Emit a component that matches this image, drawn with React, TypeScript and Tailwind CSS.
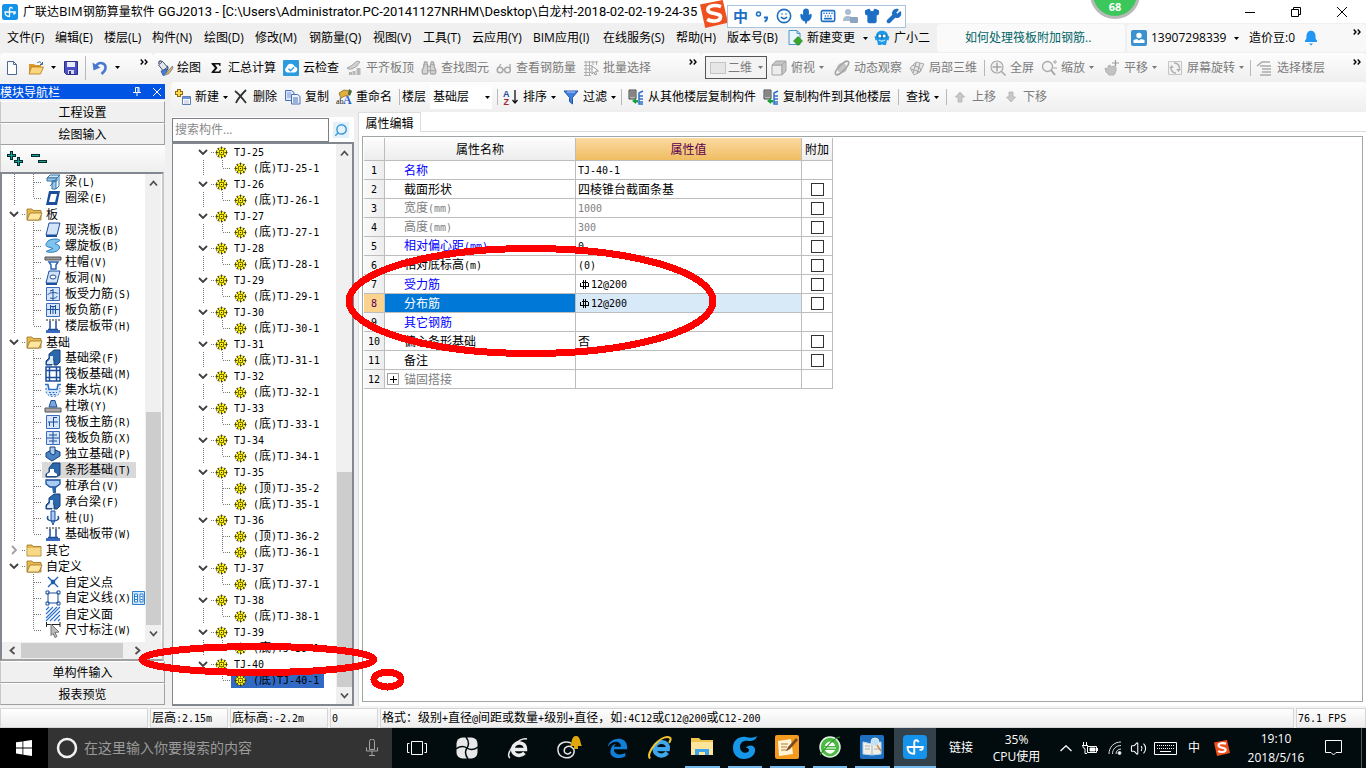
import React from "react";
import {
  Binoculars, Keyboard, Mic, Shirt, Smile, Wrench, Search, Volume2,
} from "lucide-react";

const UI = "font-['Open_Sans','Noto_Sans_CJK_SC',sans-serif]";

/* Splits a label into Latin and Han runs so that each keeps its own face. */
function Song({ t }: { t: string }) {
  const parts = t.match(/[\x20-\x7e]+|[^\x20-\x7e]+/g) || [];
  return (
    <span className="whitespace-pre font-['Noto_Sans_CJK_SC',sans-serif] text-[12px] leading-4">
      {parts.map((p, i) =>
        /^[\x20-\x7e]/.test(p) ? (
          <span key={i} className="font-['DejaVu_Sans_Mono',monospace] text-[10px]">{p}</span>
        ) : (
          <span key={i}>{p}</span>
        )
      )}
    </span>
  );
}

const Caret = ({ className = "" }: { className?: string }) => (
  <svg width="5" height="3" viewBox="0 0 5 3" className={"shrink-0 " + className}><path d="M0 0h5L2.5 3z" fill="currentColor" /></svg>
);
const Chevrons = () => (
  <svg width="8" height="6" viewBox="0 0 8 6" className="shrink-0"><path d="M.7.5L3 3 .7 5.5M4.7.5L7 3 4.7 5.5" fill="none" stroke="#000" strokeWidth="1.4" /></svg>
);
const Sep = ({ className = "" }: { className?: string }) => <span className={"h-4 w-px shrink-0 bg-[#b8b8b8] " + className} />;

const I = ({ children, s = 16 }: { children: React.ReactNode; s?: number }) => (
  <svg width={s} height={s} viewBox="0 0 16 16" fill="none" className="shrink-0 overflow-visible">{children}</svg>
);

/* ---- toolbar icons ---- */
const NewDoc = () => <I><path d="M3.5 1.5h6l3 3v10h-9z" fill="#fff" stroke="#4b6a93" /><path d="M9.500 1.500v3h3" stroke="#4b6a93" /></I>;
const OpenIco = () => <I><path d="M1 4h5l1 1h6v9H1z" fill="#d99a2b" /><path d="M3.500 7h12l-3 7H1z" fill="#fcd77a" stroke="#b57a1c" strokeWidth=".8" /><path d="M9 3c2-2 4-1 4.500 1M14.500 2v2.500h-2.500" stroke="#35629c" /></I>;
const SaveIco = () => <I><path d="M1.500 1.500h13v13h-11l-2-2z" fill="#4b4fc4" stroke="#2b2d86" /><path d="M4 2h8v5H4z" fill="#e8ebfa" /><path d="M5 10h6v4H5z" fill="#d5d8f0" /><path d="M6 11h2v3H6z" fill="#33368f" /></I>;
const UndoIco = () => <I><path d="M4 6c3-5 10-3 9.500 2 0 3-2 4.500-4 6" stroke="#4a78cf" strokeWidth="2.600" /><path d="M.5 2.500l1 8 7-3z" fill="#4a78cf" /></I>;
const PaintIco = () => <I><path d="M1.500 5l4-3.500 5 5.500-4.500 3.500z" fill="#e3e8f0" stroke="#43536e" /><path d="M2 4C1 1 4 0 5 2M10 6c1 1 1.500 3 0 4" stroke="#43536e" strokeWidth="1.300" /><path d="M4 11l6-2v4l-4 2.500z" fill="#4b7fd0" stroke="#27499c" strokeWidth=".7" /><path d="M15.500 6l-5 5.500-3.500 4 5-2 4-5.500z" fill="#e9b23c" stroke="#5d7aa8" strokeWidth=".8" /></I>;
const Sigma = () => <I><path d="M3.500 3h9v3h-1l-.7-1.500H7L9.500 8 6.500 11.500H11l1-1.800h1L12.500 13h-9v-1L7 8 3.500 4z" fill="#111" /></I>;
const CloudIco = () => <I><rect width="16" height="16" rx="1" fill="#2b9be0" /><path d="M4 12.500a3 3 0 01-.3-5.500 4.200 4.200 0 018-.6 3.100 3.100 0 01.3 6.100z" fill="#fff" /><path d="M5.500 8.800l2 2 3.500-3.500" stroke="#2b9be0" strokeWidth="1.400" /></I>;
const AlignIco = () => <I><path d="M1 8l4-2 6-5 3 1-3 4-5 3H2z" fill="#d2d2d2" stroke="#a5a5a5" /><path d="M3 15v-3h3v3zM6.500 15v-4h3v4zM10.500 15V8h4v7z" fill="#b7b7b7" /></I>;
const GlassesIco = () => <I><circle cx="4" cy="10" r="2.800" stroke="#a8a8a8" strokeWidth="1.500" /><circle cx="11.500" cy="10" r="2.800" stroke="#a8a8a8" strokeWidth="1.500" /><path d="M1.500 9L5 4M14 9V4M6.800 9.500h2" stroke="#a8a8a8" strokeWidth="1.300" /></I>;
const BatchIco = () => <I><path d="M1 2h14M1 5.500h8M1 9h7M1 12.500h7M1 15.500h7M3 1v14M6.500 1v14M10 1v4M13.500 1v4" stroke="#adadad" /><path d="M9 6l6.500 5-3 .3 1 3-1.500.6-1.200-3L9 14z" fill="#fff" stroke="#999" /></I>;
const CubeIco = () => <I><path d="M1 5h10v10H1z" fill="#ececec" stroke="#a5a5a5" /><path d="M1 5l4-4h10l-4 4zM11 5l4-4v10l-4 4z" fill="#c5c5c5" stroke="#a5a5a5" /></I>;
const OrbitIco = () => <I><circle cx="8" cy="8" r="5" fill="#c4c4c4" /><ellipse cx="8" cy="8" rx="9" ry="3" transform="rotate(-45 8 8)" stroke="#a5a5a5" strokeWidth="1.500" /></I>;
const LocalIco = () => <I><path d="M1 8l6-6 8 2-4 8-6 3z" fill="#e6e6e6" stroke="#aaa" /><path d="M4 5l7 3 1 3M7 3l-3 10M11 3L8 14M2 9l9 3" stroke="#a5a5a5" /></I>;
const FullIco = () => <I><circle cx="7" cy="7" r="6" stroke="#aaa" strokeWidth="1.200" fill="#f2f2f2" /><path d="M7 2.500v9M2.500 7h9M11.500 11.500l4 4" stroke="#a5a5a5" strokeWidth="1.500" /></I>;
const ZoomIco = () => <I><circle cx="6.500" cy="6.500" r="5" stroke="#aaa" strokeWidth="1.300" fill="#f4f4f4" /><path d="M10 10l4 5" stroke="#a5a5a5" strokeWidth="2" /><path d="M12 2h4M14 0v4M12 8h4" stroke="#aaa" /></I>;
const PanIco = () => <I><path d="M1 8l3 1V6l2-1 1 2 3-1 2 1v4l-2 4H5L2 12z" fill="#c2c2c2" stroke="#b2b2b2" /><path d="M8 3h7M11.500 0v6" stroke="#999" strokeWidth="1.200" /></I>;
const RotIco = () => <I><path d="M1.500 1.500h13v13h-13z" fill="#f2f2f2" stroke="#c5c5c5" /><path d="M7 3a5 5 0 015 7M9 13a5 5 0 01-5-6" stroke="#b0b0b0" strokeWidth="1.600" /><path d="M2 8l3-3 1.500 3zM9 9h5l-2.500 3z" fill="#b0b0b0" /></I>;
const FloorIco = () => <I><path d="M0 6l5-4h8M3 6h11M5 9h9M5 12h9M3 15h11" stroke="#aaa" strokeWidth="1.600" /></I>;
const NewComp = () => <I><path d="M4 0v8M0 4h8" stroke="#8b6b10" strokeWidth="4" /><path d="M4 1v6M1 4h6" stroke="#ffd84a" strokeWidth="2" /><path d="M7.500 7.500h8v8h-8z" fill="#fff" stroke="#5f7fb4" /><path d="M8 8h7v2H8z" fill="#6b93d6" /><path d="M9 12h5M9 14h5" stroke="#a9bddf" /></I>;
const DelIco = () => <I><path d="M2 2c4 3 8 8 11 12M13 1C9 5 5 9 3 14" stroke="#333" strokeWidth="1.800" /></I>;
const CopyIco = () => <I><path d="M.5 1.500h6l2.500 2v8H.500z" fill="#dce8fb" stroke="#4a6fb5" /><path d="M2 4h4M2 6h4M2 8h4" stroke="#7b9bd3" /><path d="M6.500 5.500h6l2.500 2v7.500H6.500z" fill="#eef4ff" stroke="#4a6fb5" /><path d="M8 9h5M8 11h5M8 13h5" stroke="#4a6fb5" /></I>;
const RenIco = () => <I><path d="M3 4l5-3 6 1-1 4-4 1-4 2-1-2z" fill="#e0b13c" stroke="#7b5b14" strokeWidth=".7" /><path d="M13 0l3 2-2 5-2-2z" fill="#476b3a" /><text x="0" y="15" fontSize="8" fontFamily="Liberation Serif" fill="#111">ab</text><text x="7" y="15" fontSize="12" fontWeight="bold" fontFamily="Liberation Serif" fill="#2a62c4">A</text></I>;
const SortIco = () => <I><text x="0" y="7.500" fontSize="9" fontWeight="bold" fontFamily="Liberation Sans" fill="#27499c">A</text><text x="0.500" y="15.500" fontSize="9" fontWeight="bold" fontFamily="Liberation Sans" fill="#9a2b33">Z</text><path d="M12 1v13M9.500 11l2.500 3 2.500-3" stroke="#111" strokeWidth="1.300" /></I>;
const FilterIco = () => <I><path d="M1 2h14L9.500 8.500V15l-3-2.500v-4z" fill="#3f7fe0" stroke="#2455a8" /><path d="M4 3h8" stroke="#b4d2ff" /></I>;
const FloorCopyIco = () => <I><path d="M1 1h7v9H1z" fill="#b8b8b8" stroke="#444" /><path d="M2 3h5M2 5h5M2 7h5" stroke="#555" /><path d="M15 2l-4 2v11h4M11 7h4M11 10h4M11 13h4" stroke="#2f71c9" strokeWidth="1.500" /><path d="M4 12l4-3v2h2v2.500H8V15z" fill="#17a03a" /></I>;
const UpIco = () => <I><path d="M8 3l4.500 5H10v5H6V8H3.500z" fill="#c9c9c9" stroke="#aaa" strokeWidth=".7" /></I>;
const DownIco = () => <I><path d="M8 13l4.500-5H10V3H6v5H3.500z" fill="#c9c9c9" stroke="#aaa" strokeWidth=".7" /></I>;
const ChangeIco = () => <I><path d="M2 .5h8l3 3v11H2z" fill="#eaf5fd" stroke="#4a95c9" /><path d="M10 .5v3h3" stroke="#4a95c9" /><path d="M11 6.500l4.500 4.500L11 15.500 6.500 11z" fill="#37a62b" stroke="#1c7a19" strokeWidth=".6" /></I>;
const RobotIco = () => <I><path d="M2 6c0-7 12-7 12 0l1.500.5-1 4-1.500-.5-1 5H9l-1-1-1 1H4l-1-5-1.500.5-1-4z" fill="#1e9be8" /><path d="M3 4.500h10v2.500c0 2-10 2-10 0z" fill="#1277bd" /><circle cx="5.800" cy="6" r="1.500" fill="#fff" /><circle cx="10.200" cy="6" r="1.500" fill="#fff" /><path d="M5 10c2 1.500 4 1.500 6 0" stroke="#fff" /></I>;
const UserIco = () => <I><rect width="16" height="16" rx="2" fill="#3b92cf" /><circle cx="8" cy="5.500" r="2.700" fill="#fff" /><path d="M2.500 13V10l3.500-1 2 1.500L10 9l3.500 1v3z" fill="#fff" /></I>;
const BellIco = () => <I><path d="M2 12V10.500c1.500-1 1.500-3 1.500-5C4 2 6 .8 8 .8S12 2 12.500 5.500c0 2 0 4 1.500 5V12z" fill="#2196f3" /><path d="M6 13.500h4L8 15.500z" fill="#2196f3" /></I>;
const AppLogo = ({ s = 16 }: { s?: number }) => <I s={s}><rect width="16" height="16" rx="2.500" fill="#1593ea" /><path d="M10.200 4.300C9.500 3 7.500 3.200 7.500 5v7.500M3 8h10.200c.2 1.300-.6 2-1.700 1.800M3 8c0 2.800 1.500 4.500 4.500 4.500" stroke="#fff" strokeWidth="1.300" strokeLinecap="round" /></I>;
const SogouS = ({ s }: { s: number }) => <I s={s}><path d="M0 2.500L13 0l3 13-13 3z" fill="#f0501e" /><path d="M12 3.800C9 2.600 4.500 3 4.500 5.500c0 3 7.500 1.500 7.200 4.400-.3 2.500-5 2.700-7.600 1.200" stroke="#fff" strokeWidth="2.100" /></I>;

type TB = { t: string; icon: React.ReactNode; w: string; dim?: boolean; caret?: boolean };
const ToolButton = ({ b }: { b: TB }) => (
  <button className={`flex h-5 shrink-0 items-center gap-1 whitespace-nowrap ${b.w} ${b.dim ? "text-[#7b7b7b]" : "text-black"}`}>
    {b.icon}
    <span>{b.t}</span>
    {b.caret && <Caret className="text-current" />}
  </button>
);

const L = "h-4 w-4 shrink-0 text-[#a8a8a8]";
const barA: TB[] = [
  { t: "绘图", icon: <PaintIco />, w: "w-[51px]" },
  { t: "汇总计算", icon: <Sigma />, w: "w-[75px]" },
  { t: "云检查", icon: <CloudIco />, w: "w-[63px]" },
  { t: "平齐板顶", icon: <AlignIco />, w: "w-[75px]", dim: true },
  { t: "查找图元", icon: <Binoculars className={L} fill="#d5d5d5" />, w: "w-[75px]", dim: true },
  { t: "查看钢筋量", icon: <GlassesIco />, w: "w-[87px]", dim: true },
  { t: "批量选择", icon: <BatchIco />, w: "w-[106px]", dim: true },
];
const barB: TB[] = [
  { t: "俯视", icon: <CubeIco />, w: "w-[63px]", dim: true, caret: true },
  { t: "动态观察", icon: <OrbitIco />, w: "w-[75px]", dim: true },
  { t: "局部三维", icon: <LocalIco />, w: "w-[75px]", dim: true },
];
const barC: TB[] = [
  { t: "全屏", icon: <FullIco />, w: "w-[51px]", dim: true },
  { t: "缩放", icon: <ZoomIco />, w: "w-[63px]", dim: true, caret: true },
  { t: "平移", icon: <PanIco />, w: "w-[63px]", dim: true, caret: true },
  { t: "屏幕旋转", icon: <RotIco />, w: "w-[83px]", dim: true, caret: true },
];

const menus: [string, string][] = [
  ["文件(F)", "w-[48px]"], ["编辑(E)", "w-[49px]"], ["楼层(L)", "w-[48px]"], ["构件(N)", "w-[52px]"],
  ["绘图(D)", "w-[51px]"], ["修改(M)", "w-[54px]"], ["钢筋量(Q)", "w-[64px]"], ["视图(V)", "w-[50px]"],
  ["工具(T)", "w-[49px]"], ["云应用(Y)", "w-[61px]"], ["BIM应用(I)", "w-[70px]"], ["在线服务(S)", "w-[73px]"],
  ["帮助(H)", "w-[51px]"], ["版本号(B)", "w-[60px]"],
];

function SogouBar() {
  const c = "h-4 w-4 text-[#1c6fc4]";
  return (
    <div className="absolute left-[700px] top-0 z-20 flex h-7 items-center">
      <SogouS s={28} />
      <div className="-ml-px mt-1 flex h-[23px] w-[179px] items-center justify-around border border-[#a9c4de] bg-white pl-0.5">
        <span className="text-[15px] font-bold leading-4 text-[#1c6fc4]">中</span>
        <I><circle cx="4.500" cy="6" r="2" stroke="#1c6fc4" strokeWidth="1.500" /><path d="M10 9.500h3c0 2-.5 3.500-2.500 4" stroke="#1c6fc4" strokeWidth="2" /></I>
        <Smile className={c} strokeWidth={2.4} />
        <Mic className={c} strokeWidth={2.8} fill="#1c6fc4" />
        <Keyboard className={c} strokeWidth={2.4} />
        <I><circle cx="6" cy="4" r="3" fill="#a9bbd1" /><path d="M1 13c0-4 2-5 5-5s4 1 5 2v3z" fill="#a9bbd1" /><rect x="8" y="9" width="8" height="6" rx="1" fill="#8ba4c2" /></I>
        <Shirt className={c} fill="#1c6fc4" />
        <Wrench className={c} fill="#1c6fc4" />
      </div>
    </div>
  );
}

function TitleBar() {
  return (
    <header className="relative flex h-[23px] shrink-0 items-center bg-white pl-0.5">
      <AppLogo s={16} />
      <h1 className="ml-[5px] flex-1 whitespace-nowrap text-[12px] font-normal">
        广联达<span className="text-[13px]">BIM</span>钢筋算量软件
        <span className="font-[Roboto,sans-serif] text-[13px]"> GGJ2013 - [C:\Users\Administrator.PC-20141127NRHM\Desktop\</span>白龙村
        <span className="font-[Roboto,sans-serif] text-[13px]">-2018-02-02-19-24-35</span>
      </h1>
      <SogouBar />
      <div className="absolute -top-[31px] right-[226px] z-10 flex h-[50px] w-[50px] items-end justify-center rounded-full border-[3px] border-[#b9b9b9] bg-[#3cc75a] pb-[3px] text-[11px] font-bold leading-3 text-white">68</div>
      <div className="flex">
        <button aria-label="最小化" className="flex w-[46px] items-center justify-center"><svg width="10" height="10"><path d="M0 5.500h10" stroke="#000" /></svg></button>
        <button aria-label="还原" className="flex w-[45px] items-center justify-center"><svg width="10" height="10" fill="none" stroke="#000"><path d="M.5 2.500h7v7h-7zM2.500 2.500v-2h7v7h-2" /></svg></button>
        <button aria-label="关闭" className="flex w-12 items-center justify-center"><svg width="10" height="10"><path d="M0 0l10 10M10 0L0 10" stroke="#000" /></svg></button>
      </div>
    </header>
  );
}

function MenuBar() {
  return (
    <nav className="flex h-[30px] shrink-0 items-center bg-[#f0f0f0] pl-[7px]">
      {menus.map(([m, w]) => (
        <button key={m} className={`shrink-0 whitespace-nowrap text-left ${w}`}>{m}</button>
      ))}
      <button className="flex w-[87px] shrink-0 items-center gap-1 whitespace-nowrap"><ChangeIco />新建变更<Caret className="ml-1" /></button>
      <button className="flex w-[63px] shrink-0 items-center gap-1 whitespace-nowrap"><RobotIco />广小二</button>
      <a href="#help" className="flex h-7 w-[188px] shrink-0 items-center rounded bg-[#fafafa] pl-7 text-[#006466]">如何处理筏板附加钢筋..</a>
      <div className="ml-0.5 flex h-7 flex-1 items-center rounded bg-[#f8f8f8] pl-1">
        <button className="flex w-[118px] shrink-0 items-center gap-1"><UserIco /><span>13907298339</span><Caret className="ml-1" /></button>
        <span className="w-[54px] shrink-0 whitespace-nowrap">造价豆:0</span>
        <BellIco />
        <span className="ml-auto mb-3 pr-[5px]"><Chevrons /></span>
      </div>
    </nav>
  );
}

const Bar = "bg-linear-to-b from-[#fdfdfd] to-[#efefef]";

function ToolBar() {
  return (
    <div className="flex h-[29px] shrink-0 items-center bg-[#f0f0f0]">
      <div className={`flex h-[29px] w-[153px] shrink-0 items-center rounded pl-1 ${Bar}`}>
        <button aria-label="新建" className="w-6"><NewDoc /></button>
        <button aria-label="打开" className="flex w-[35px] items-center gap-[7px]"><OpenIco /><Caret /></button>
        <button aria-label="保存" className="w-[22px]"><SaveIco /></button>
        <Sep className="h-6" />
        <button aria-label="撤销" className="ml-[6px] flex items-center gap-[7px]"><UndoIco /><Caret /></button>
        <span className="mb-3 ml-5"><Chevrons /></span>
      </div>
      <div className={`flex h-[29px] shrink-0 items-center rounded pl-1 ${Bar}`}>
        {barA.map((b) => <ToolButton key={b.t} b={b} />)}
        <span className="mb-3 mr-1"><Chevrons /></span>
      </div>
      <div className={`flex h-[29px] flex-1 items-center rounded pl-1 ${Bar}`}>
        <div className="mr-1 flex h-[23px] w-[62px] shrink-0 items-center border border-[#555] bg-[#f3f3f3] pl-1 text-[#7b7b7b]">
          <span className="h-3 w-4 shrink-0 border border-[#c4c4c4] bg-[#e6e6e6]" />
          <select aria-label="视图模式" className="ml-0.5 w-[30px] appearance-none bg-transparent"><option>二维</option></select>
          <Caret />
        </div>
        {barB.map((b) => <ToolButton key={b.t} b={b} />)}
        <Sep className="mr-[5px]" />
        {barC.map((b) => <ToolButton key={b.t} b={b} />)}
        <Sep className="mr-[6px]" />
        <ToolButton b={{ t: "选择楼层", icon: <FloorIco />, w: "w-[70px]", dim: true }} />
        <span className="mb-3 ml-auto pr-[5px]"><Chevrons /></span>
      </div>
    </div>
  );
}

function ComponentBar() {
  return (
    <div className={`flex h-[30px] shrink-0 items-center rounded pl-1 ${Bar}`}>
      <ToolButton b={{ t: "新建", icon: <NewComp />, w: "w-[58px]", caret: true }} />
      <ToolButton b={{ t: "删除", icon: <DelIco />, w: "w-[52px]" }} />
      <ToolButton b={{ t: "复制", icon: <CopyIco />, w: "w-[51px]" }} />
      <ToolButton b={{ t: "重命名", icon: <RenIco />, w: "w-[63px]" }} />
      <Sep />
      <label htmlFor="floor" className="ml-[2px] w-7 whitespace-nowrap">楼层</label>
      <div className="flex h-6 w-[62px] items-center bg-white pl-[3px]">
        <select id="floor" className="w-[52px] appearance-none bg-transparent"><option>基础层</option></select>
        <Caret />
      </div>
      <Sep className="mx-[5px]" />
      <ToolButton b={{ t: "排序", icon: <SortIco />, w: "w-[60px]", caret: true }} />
      <ToolButton b={{ t: "过滤", icon: <FilterIco />, w: "w-[58px]", caret: true }} />
      <Sep className="mr-[6px]" />
      <ToolButton b={{ t: "从其他楼层复制构件", icon: <FloorCopyIco />, w: "w-[135px]" }} />
      <ToolButton b={{ t: "复制构件到其他楼层", icon: <FloorCopyIco />, w: "w-[135px]" }} />
      <Sep className="mr-[7px]" />
      <button className="flex w-10 shrink-0 items-center gap-1 whitespace-nowrap">查找<Caret /></button>
      <Sep className="mr-[5px]" />
      <ToolButton b={{ t: "上移", icon: <UpIco />, w: "w-[51px]", dim: true }} />
      <ToolButton b={{ t: "下移", icon: <DownIco />, w: "w-[51px]", dim: true }} />
    </div>
  );
}

/* ---- trees ---- */
const dots = { stroke: "#777", strokeDasharray: "1 1" };
const Arrow = ({ d }: { d: "up" | "down" | "left" | "right" }) => (
  <svg width="9" height="9" viewBox="0 0 9 9" fill="none" stroke="#505050" strokeWidth="1.800">
    <path d={{ up: "M1 6.500l3.500-4L8 6.500", down: "M1 2.500l3.500 4L8 2.500", left: "M6.500 1l-4 3.500L6.500 8", right: "M2.500 1l4 3.500L2.500 8" }[d]} />
  </svg>
);
function VBar({ top, thumb }: { top: string; thumb: string }) {
  return (
    <div className="flex w-4 shrink-0 flex-col items-center bg-[#f0f0f0]">
      <span className="flex h-[18px] items-center"><Arrow d="up" /></span>
      <span className={top} />
      <span className={`w-[15px] bg-[#cdcdcd] ${thumb}`} />
      <span className="flex h-[17px] items-center"><Arrow d="down" /></span>
    </div>
  );
}

const b1 = "#1b4f9c";
const sq = <path d="M1.500 1.500h13v13h-13z" fill="#d7e6fa" stroke="#3b6cc0" />;
const kinds: Record<string, React.ReactNode> = {
  beam: <><path d="M2 4l3-3h10l-3 3z" fill="#cfe4f8" stroke="#39729f" /><path d="M2 4h10v3H2zM7 7h4v8H7z" fill="#9cc8ef" stroke="#39729f" /><path d="M11 15l3-3V1M5 12l8-9" stroke="#2b78b5" /></>,
  ring: <><path d="M4 1h11l-3 14H1z" fill={b1} /><path d="M6 4h6l-2 8H4z" fill="#fff" /></>,
  slab: <><path d="M4 1h11l-3 12H1z" fill="#d3e3f8" stroke={b1} /><path d="M1 13h11v2H1z" fill={b1} /></>,
  spiral: <path d="M3 3c4-3 12-2 12-.5l-5 3 4 2c3 5-6 8.500-13 6l7-3-6-2c-2-1-1-3.500 1-5.500z" fill="#7ec3ee" stroke="#2a7fb8" />,
  cap: <><path d="M0 3h16v3H0z" fill="#999" stroke="#555" /><path d="M4 8h9l-2 3v4H6v-4z" fill="#fff" stroke="#2a63b8" strokeWidth="1.500" /></>,
  hole: <><path d="M4 1h11l-3 12H1z" fill="#d3e3f8" stroke={b1} /><path d="M1 13h11v2H1z" fill={b1} /><ellipse cx="8" cy="7" rx="3" ry="2" fill="#fff" stroke={b1} /></>,
  r1: <>{sq}<path d="M3 9c0-3 10-3 10-1M8 3v11M5 12c3 1 7 0 7-2M5 5l3-1" stroke={b1} /></>,
  r2: <>{sq}<path d="M2 7.500h12M5.500 3v9M10.500 3v9M5 4.500h6M8 4v8" stroke={b1} /></>,
  r3: <>{sq}<path d="M3 8h10M8.500 3v10M8.500 3.500H12M4.500 8v4" stroke={b1} /></>,
  r4: <>{sq}<path d="M2 8h12M8 2v12M4 5h8M4 11h8" stroke={b1} /></>,
  band: <><path d="M1 2h14" stroke="#222" strokeDasharray="2 1" /><path d="M1 12h14v3H1z" fill="#3b6cc0" /><path d="M5 3v9M11 3v9M3 11.500h10" stroke={b1} strokeWidth="1.500" /></>,
  fbeam: <><path d="M1 15v-4l3-3V4l5-4h6v12l-3 3H9v-5H7v5z" fill="#2a67ad" stroke="#163f73" /><path d="M2 14v-2l3-3V6h3v8z" fill="#dce9f9" /></>,
  raft: <><path d="M1 1h14v14H1z" fill="#fff" stroke={b1} strokeWidth="1.500" /><path d="M4.500 1v14M11.500 1v14M1 4.500h14M1 11.500h14" stroke={b1} strokeWidth="1.500" /></>,
  pit: <><path d="M1 3v6c2 7 12 7 14 0V3h-2l-1 6H5L3 3z" fill="#d7e6fa" /><path d="M0 2.500h3l1 5h8l1-5h3" stroke="#2a70c8" strokeWidth="1.500" /><path d="M1 6v4c2 6 12 6 14 0V6M4 10.500h8M5 12.500h6" stroke="#2a70c8" strokeDasharray="2 1.500" /></>,
  pier: <><path d="M0 10h16v4H0z" fill="#aaa" stroke="#555" /><path d="M4 9l1-3 1-3.500h4l1 3.500 1 3z" fill="#7ba7dd" stroke={b1} /></>,
  single: <><path d="M1 7l7-4 7 3v4l-8 5-6-4z" fill="#4a85c8" stroke="#163f73" /><path d="M5 1h5v7l-2 1-3-2z" fill="#a9cdf2" stroke="#163f73" /></>,
  strip: <><path d="M1 15v-3l3-2V6l4-5h7v12l-4 2z" fill="#2a67ad" stroke="#163f73" /><path d="M2 14v-2l3-2V7h4v3l3 2v2z" fill="#fff" /></>,
  pcap: <><path d="M1 2h14v4l-4 3H5L1 6z" fill="#a9cdf2" stroke={b1} strokeWidth="1.300" /><path d="M7 9h4v6H8z" fill="#2a67ad" /></>,
  pile: <><path d="M6 1h4v9l-2 5-2-5z" fill="#a9cdf2" stroke={b1} /><path d="M3 6c-2 4 2 5 5 5s7-1 5-5" stroke={b1} strokeWidth="1.500" /></>,
  pt: <path d="M3 3l10 10M13 3L3 13M6.500 6.500h3v3h-3z" stroke="#1c5fae" strokeWidth="1.300" />,
  line: <path d="M3 3h10v10H3zM1 1h3v3H1zM12 1h3v3h-3zM1 12h3v3H1zM12 12h3v3h-3z" stroke={b1} fill="#fff" />,
  face: <path d="M1 4l3-3M1 8l7-7M1 12l11-11M1 15L15 1M5 15L15 5M9 15l6-6M13 15l2-2" stroke="#2a70c8" strokeWidth="1.100" />,
  dim: <><path d="M1.500 0v5M15 0v5M1 2.500h14" stroke="#222" /><path d="M6 2l8 8-4 .5 2 4-2 1-2-4-2 2z" fill="#bbb" stroke="#777" /></>,
};

const Folder = ({ open }: { open?: boolean }) => (
  <I><path d="M1 3h5l1 1.500h8V14H1z" fill="#e9b94d" stroke="#9a7424" strokeWidth=".8" />{open ? <path d="M4 7h12l-3 7H1z" fill="#ffe6a0" stroke="#9a7424" strokeWidth=".8" /> : <path d="M1.500 6H14.500v7.500h-13z" fill="#f7d887" />}</I>
);

type Node = { g?: string; open?: boolean; t?: string; k?: string; last?: boolean; noline?: boolean; sel?: boolean; extra?: boolean };
const nav: Node[] = [
  { t: "梁(L)", k: "beam" }, { t: "圈梁(E)", k: "ring", last: true },
  { g: "板", open: true },
  { t: "现浇板(B)", k: "slab" }, { t: "螺旋板(B)", k: "spiral" }, { t: "柱帽(V)", k: "cap" }, { t: "板洞(N)", k: "hole" },
  { t: "板受力筋(S)", k: "r1" }, { t: "板负筋(F)", k: "r2" }, { t: "楼层板带(H)", k: "band", last: true },
  { g: "基础", open: true },
  { t: "基础梁(F)", k: "fbeam" }, { t: "筏板基础(M)", k: "raft" }, { t: "集水坑(K)", k: "pit" }, { t: "柱墩(Y)", k: "pier" },
  { t: "筏板主筋(R)", k: "r3" }, { t: "筏板负筋(X)", k: "r4" }, { t: "独立基础(P)", k: "single" },
  { t: "条形基础(T)", k: "strip", sel: true }, { t: "桩承台(V)", k: "pcap" }, { t: "承台梁(F)", k: "fbeam" },
  { t: "桩(U)", k: "pile" }, { t: "基础板带(W)", k: "band", last: true },
  { g: "其它" }, { g: "自定义", open: true },
  { t: "自定义点", k: "pt", noline: true }, { t: "自定义线(X)", k: "line", noline: true, extra: true },
  { t: "自定义面", k: "face", noline: true }, { t: "尺寸标注(W)", k: "dim", noline: true, last: true },
];

function NavTree() {
  return (
    <ul className="min-w-0 flex-1">
      {nav.map((n, i) => (
        <li key={i} className="flex h-4 items-center whitespace-nowrap">
          {n.g ? (
            <>
              <svg width="23" height="16" className="shrink-0" fill="none">
                <path d={n.open ? "M7 6l4 4 4-4" : "M9 4l4 4-4 4"} stroke={n.open ? "#404040" : "#a0a0a0"} strokeWidth="1.800" />
                <path d="M19 8.500h4" {...dots} />
              </svg>
              <Folder open={n.open} />
              <button className="ml-1 flex"><Song t={n.g} /></button>
            </>
          ) : (
            <>
              <svg width="39" height="16" className="shrink-0">
                {!n.noline && <path d="M11.500 0v16" {...dots} />}
                <path d={n.last ? "M30.500 0v8" : "M30.500 0v16"} {...dots} />
                <path d="M31 8.500h8" {...dots} />
              </svg>
              <button className={`flex h-4 items-center pl-[3px] ${n.sel ? "bg-[#d9d9d9] pr-[5px]" : ""}`}>
                <I>{kinds[n.k!]}</I>
                <span className="ml-1 flex"><Song t={n.t!} /></span>
              </button>
              {n.extra && (
                <svg width="13" height="14" className="ml-px shrink-0"><path d="M.5.500h12v13H.5z" fill="#cfe6fb" stroke="#2a7fcf" /><path d="M2.500 3h3v8h-3zM8 3h3v8H8z" fill="#fff" stroke="#2a7fcf" /><path d="M3 5.500h2M3 8.500h2M8.500 5.500h2M8.500 8.500h2" stroke="#2a7fcf" /></svg>
              )}
            </>
          )}
        </li>
      ))}
    </ul>
  );
}

const Stack = ({ children }: { children: React.ReactNode }) => (
  <button className="flex h-[22px] w-full shrink-0 items-center justify-center border border-t-[#fff] border-r-[#a0a0a0] border-b-[#a0a0a0] border-l-[#c8c8c8] bg-[#f0f0f0] font-['Noto_Sans_CJK_SC',sans-serif]">{children}</button>
);

function NavPanel() {
  return (
    <aside className="flex w-[165px] shrink-0 flex-col pb-px pt-0.5">
      <div className="flex h-[15px] shrink-0 items-center bg-[#0054e3] text-white">
        <h2 className="flex-1 whitespace-nowrap font-['Noto_Sans_CJK_SC',sans-serif] text-[12px] font-normal leading-[15px]">模块导航栏</h2>
        <button aria-label="固定" className="mr-3"><svg width="8" height="9" fill="none" stroke="#fff"><path d="M2.500.5h3.500v5h-3.500zM5 .5v5M0 5.500h8M4 6v3" /></svg></button>
        <button aria-label="关闭面板" className="mr-1"><svg width="8" height="8"><path d="M0 0l8 8M8 0L0 8" stroke="#fff" /></svg></button>
      </div>
      <div className="h-[2px] shrink-0" />
      <Stack>工程设置</Stack>
      <Stack>绘图输入</Stack>
      <div className={`flex h-[27px] shrink-0 items-center gap-2 border-l border-[#c8c8c8] pl-1.5 ${Bar}`}>
        <button aria-label="全部展开"><svg width="16" height="15"><path d="M0 4.500h9M4.500 0v9M7 10.500h9M11.500 6v9" stroke="#002b2b" strokeWidth="3" /><path d="M1 4.500h7M4.500 1v7M8 10.500h7M11.500 7v7" stroke="#1aa39a" /></svg></button>
        <button aria-label="全部折叠"><svg width="16" height="15"><path d="M0 4.500h9M7 10.500h9" stroke="#002b2b" strokeWidth="3" /><path d="M1 4.500h7M8 10.500h7" stroke="#1aa39a" /></svg></button>
      </div>
      <div className="mr-px flex min-h-0 flex-1 flex-col border-2 border-[#828790] border-r-[#c8c8c8] border-b-[#a0a0a0] bg-white">
        <div className="flex min-h-0 flex-1 pl-px pr-px">
          <NavTree />
          <VBar top="grow-[219] basis-0" thumb="grow-[213] basis-0" />
        </div>
        <div className="flex h-[17px] shrink-0 items-center bg-[#f0f0f0] pl-0.5">
          <span className="flex w-[17px] justify-center"><Arrow d="left" /></span>
          <span className="h-[15px] w-[102px] bg-[#cdcdcd]" />
          <span className="ml-2 flex w-3 justify-center"><Arrow d="right" /></span>
        </div>
      </div>
      <Stack>单构件输入</Stack>
      <Stack>报表预览</Stack>
    </aside>
  );
}

const Gear = () => (
  <svg width="15" height="15" viewBox="0 0 15 15" className="shrink-0" fill="none">
    <circle cx="7.500" cy="7.500" r="5" stroke="#5b5700" strokeWidth="1.200" strokeDasharray="2 1.140" />
    <circle cx="7.500" cy="7.500" r="4.500" fill="#fff000" />
    <path d="M7.500 1.500v3M7.500 10.500v3M1.500 7.500h3M10.500 7.500h3M3.500 3.500l2 2M11.500 3.500l-2 2M3.500 11.500l2-2M11.500 11.500l-2-2" stroke="#3a3700" strokeWidth=".9" />
    <path d="M5.500 5.500h4v4h-4z" fill="#fff000" stroke="#5b5700" strokeWidth=".8" />
    <path d="M7 7h1v1H7z" fill="#222" />
  </svg>
);

const groups: [string, string[]][] = [
  ["25", ["(底)TJ-25-1"]], ["26", ["(底)TJ-26-1"]], ["27", ["(底)TJ-27-1"]], ["28", ["(底)TJ-28-1"]],
  ["29", ["(底)TJ-29-1"]], ["30", ["(底)TJ-30-1"]], ["31", ["(底)TJ-31-1"]], ["32", ["(底)TJ-32-1"]],
  ["33", ["(底)TJ-33-1"]], ["34", ["(底)TJ-34-1"]], ["35", ["(顶)TJ-35-2", "(底)TJ-35-1"]],
  ["36", ["(顶)TJ-36-2", "(底)TJ-36-1"]], ["37", ["(底)TJ-37-1"]], ["38", ["(底)TJ-38-1"]],
  ["39", ["(底)TJ-39-1"]], ["40", ["(底)TJ-40-1"]],
];

function ComponentTree() {
  return (
    <ul className="min-w-0 flex-1">
      {groups.map(([g, kids], gi) => (
        <li key={g}>
          <button className="flex h-4 items-center">
            <svg width="41" height="16" fill="none" className="shrink-0"><path d="M26 6l4 4 4-4" stroke="#404040" strokeWidth="1.800" /><path d="M38 8.500h3" {...dots} /></svg>
            <Gear />
            <span className="ml-[5px] flex"><Song t={"TJ-" + g} /></span>
          </button>
          <ul>
            {kids.map((k, i) => (
              <li key={k} className="flex h-4 items-center">
                <svg width="58" height="16" className="shrink-0">
                  {gi < groups.length - 1 && <path d="M30.500 0v16" {...dots} />}
                  <path d={i === kids.length - 1 ? "M49.500 0v8" : "M49.500 0v16"} {...dots} />
                  <path d="M50 8.500h8" {...dots} />
                </svg>
                <button className={`flex h-4 items-center pl-0.5 pr-[5px] ${g === "40" ? "bg-[#316ac5]" : ""}`}>
                  <Gear />
                  <span className="ml-[5px] flex"><Song t={k} /></span>
                </button>
              </li>
            ))}
          </ul>
        </li>
      ))}
    </ul>
  );
}

/* ---- property grid ---- */
type Row = { n: string; v?: string; c?: string; box?: boolean; bar?: boolean };
const rows: Row[] = [
  { n: "名称", v: "TJ-40-1", c: "text-[#0000ff]" },
  { n: "截面形状", v: "四棱锥台截面条基", box: true },
  { n: "宽度(mm)", v: "1000", c: "text-[#808080]", box: true },
  { n: "高度(mm)", v: "300", c: "text-[#808080]", box: true },
  { n: "相对偏心距(mm)", v: "0", c: "text-[#0000ff]", box: true },
  { n: "相对底标高(m)", v: "(0)", box: true },
  { n: "受力筋", v: "12@200", c: "text-[#0000ff]", box: true, bar: true },
  { n: "分布筋", v: "12@200", c: "text-white", box: true, bar: true },
  { n: "其它钢筋", c: "text-[#0000ff]" },
  { n: "偏心条形基础", v: "否", box: true },
  { n: "备注", v: "", box: true },
  { n: "锚固搭接", c: "text-[#808080]" },
];
const cell = "border-b border-r border-[#bdbdbd] p-0";

function PropertyGrid() {
  return (
    <table className="w-[469px] table-fixed border-separate border-spacing-0">
      <thead className="font-['Noto_Sans_CJK_SC',sans-serif]">
        <tr className="h-[23px]">
          <th className={`w-[21px] ${cell} bg-linear-to-b from-[#fdfdfd] to-[#ededed]`} />
          <th className={`w-[191px] ${cell} bg-linear-to-b from-[#fdfdfd] to-[#ededed] font-normal`}>属性名称</th>
          <th className={`w-[226px] ${cell} bg-linear-to-b from-[#fbd9a0] to-[#f0bd60] font-normal text-[#5a0050]`}>属性值</th>
          <th className={`w-[31px] ${cell} bg-linear-to-b from-[#fdfdfd] to-[#ededed] font-normal`}>附加</th>
        </tr>
      </thead>
      <tbody>
        {rows.map((r, i) => {
          const sel = i === 7;
          return (
            <tr key={r.n} className="h-[19px]">
              <td className={`${cell} ${sel ? "bg-[#fcd28f] text-[#5a0050]" : "bg-linear-to-r from-[#fafafa] to-[#ededed]"}`}>
                <span className="flex h-[18px] items-center justify-center"><Song t={String(i + 1)} /></span>
              </td>
              <td className={`${cell} ${r.c || ""} ${sel ? "bg-[#0078d7]" : ""}`}>
                <span className={`flex h-[18px] items-center ${i === 11 ? "pl-0.5" : "pl-[19px]"}`}>
                  {i === 11 && (
                    <button aria-label="展开" className="mr-[5px] flex h-3 w-3 items-center justify-center border border-[#a0a0a0] bg-white">
                      <svg width="7" height="7"><path d="M0 3.500h7M3.500 0v7" stroke="#000" /></svg>
                    </button>
                  )}
                  <Song t={r.n} />
                </span>
              </td>
              <td className={`${cell} ${r.c === "text-[#808080]" ? r.c : ""} ${sel ? "bg-[#d8e9f8]" : ""}`}>
                <span className="flex h-[18px] items-center pl-0.5">
                  {r.bar && (
                    <svg width="10" height="9" viewBox="0 0 10 9" fill="none" stroke="#000" className="ml-0.5 mr-px"><path d="M0 6.500h9M3.500 0v9M5.500 0v9M2 2.500h6M.5 3v3M8.500 3v3" shapeRendering="crispEdges" /></svg>
                  )}
                  {r.v ? <Song t={r.v} /> : null}
                </span>
              </td>
              <td className={cell}>
                {r.box && <input type="checkbox" aria-label={r.n} className="mx-auto block h-[13px] w-[13px] appearance-none border border-[#333] bg-white" />}
              </td>
            </tr>
          );
        })}
      </tbody>
    </table>
  );
}

function Workspace() {
  return (
    <section className="flex min-w-0 flex-1 flex-col pl-1.5">
      <ComponentBar />
      <div className="flex min-h-0 flex-1">
        <div className="flex w-[183px] shrink-0 flex-col pl-px pt-[5px]">
          <div className="flex h-[25px] shrink-0 items-center bg-white">
            <input aria-label="搜索构件" placeholder="搜索构件..." className="h-6 w-[157px] border border-[#7a7f86] bg-white px-0.5 outline-none placeholder:text-[#8a8a8a]" />
            <button aria-label="搜索" className="ml-1 flex h-4 w-4 items-center justify-center bg-[#e4f1fb]"><Search className="h-3.5 w-3.5 -scale-x-100 text-[#3c9ad6]" strokeWidth={2.5} /></button>
          </div>
          <div className="flex min-h-0 flex-1 border-2 border-[#828790] border-l-[1px] border-b-[2px] bg-white">
            <ComponentTree />
            <VBar top="grow-[309] basis-0" thumb="grow-[215] basis-0" />
          </div>
        </div>
        <main className="ml-1 flex min-w-0 flex-1 flex-col bg-white">
          <div className="flex h-5 shrink-0">
            <button role="tab" className="h-5 w-[63px] border border-b-0 border-[#dcdcdc] bg-white font-['Noto_Sans_CJK_SC',sans-serif]">属性编辑</button>
            <span className="flex-1 border-b border-[#dcdcdc]" />
          </div>
          <div className="flex-1 border-l border-[#dcdcdc] px-[3px] pb-1 pt-1">
            <div className="h-full border border-[#a0a5a5] pl-px pt-px"><PropertyGrid /></div>
          </div>
        </main>
      </div>
    </section>
  );
}

function StatusBar() {
  const s = "flex h-5 items-center border border-[#d5d5d5] pl-px bg-linear-to-b from-[#fff] to-[#ededed]";
  return (
    <footer className="flex h-[22px] shrink-0 items-end gap-[2px] bg-[#f4f4f4]">
      <span className={`${s} w-[148px]`} />
      <span className={`${s} w-[78px]`}><Song t="层高:2.15m" /></span>
      <span className={`${s} w-[98px]`}><Song t="底标高:-2.2m" /></span>
      <span className={`${s} w-12`}><Song t="0" /></span>
      <span className={`${s} flex-1`}><Song t="格式：级别+直径@间距或数量+级别+直径，如:4C12或C12@200或C12-200" /></span>
      <span className={`${s} w-[70px]`}><Song t="76.1 FPS" /></span>
    </footer>
  );
}

/* ---- taskbar ---- */
const EPath = "M1 11C2 1 22-3 23 11v3H8c0 7 9 7 13 4v4C12 27 0 23 5 12c2-4 5-4 5-4-2 2-2 3-2 3h8C16 4 6 3 1 11z";
const apps: { n: string; icon: React.ReactNode; run?: boolean; on?: boolean }[] = [
  { n: "Edge", icon: <svg width="21" height="21" viewBox="0 0 24 24"><path d={EPath} fill="#0f7fd8" /></svg> },
  { n: "Internet Explorer", icon: <svg width="25" height="25" viewBox="0 0 24 24" fill="none"><path d="M7 13.500h13C21 5 9 4.500 7.500 12s7.500 10 12 5" stroke="#3fa7ec" strokeWidth="4" /><path d="M3 22.500C-2 18 13-1 22 2.500c1.500 1 0 4-1 5" stroke="#f4c430" strokeWidth="2" /></svg> },
  { n: "资源管理器", run: true, icon: <svg width="22" height="20" viewBox="0 0 22 20"><path d="M0 1h8l2 2h12v15H0z" fill="#f0c64e" /><path d="M0 5h22v13H0z" fill="#fde59b" /><path d="M4 18v-6h14v6h-4v-3H8v3z" fill="#3da5e8" /></svg> },
  { n: "广联达", run: true, icon: <svg width="24" height="24" viewBox="0 0 24 24"><path d="M24 1c-1 4-4 5-8 5-6-1-9 2-9 6 0 5 5 7 8 5 2-2 1-4-2-4 1-3 8-4 9 1 1 6-5 10-11 10C4 24 0 19 0 13 0 4 7 1 13 2c4 1 8 1 11-1z" fill="#1697ea" /></svg> },
  { n: "便笺", run: true, icon: <svg width="24" height="24" viewBox="0 0 24 24"><rect width="24" height="24" rx="2" fill="#f39a1f" /><path d="M3 6l13-2 2 15-14 2z" fill="#fff4d8" /><path d="M6 9h7M6 12h6M6 15h7" stroke="#b27a33" /><path d="M21 3l-8 9-2 4 4-2 8-9z" fill="#7b4a21" /></svg> },
  { n: "浏览器", run: true, icon: <svg width="24" height="24" viewBox="0 0 24 24" fill="none"><circle cx="12" cy="12" r="10" fill="#4cb944" stroke="#e6f5e2" strokeWidth="1.500" /><path d="M7.500 10.500c1-4.500 8-4.500 9 0zM6 13h12M7.500 15.500c2 3.500 7 3.500 9 0z" fill="#fff" stroke="#fff" /><path d="M2 20C8 12 16 3 22 2" stroke="#2b8f2a" strokeWidth="1.200" /></svg> },
  { n: "词典", run: true, icon: <svg width="24" height="24" viewBox="0 0 24 24"><rect width="24" height="24" rx="2" fill="#1d6fc0" /><path d="M3 7l9 2 9-2v12l-9 1-9-1z" fill="#f3efe4" stroke="#b7d7f2" /><path d="M12 9v11M5 11h5M5 14h5M14 14h5" stroke="#9db4c6" /><circle cx="15" cy="7" r="4" fill="#bfe1fa" stroke="#e6e6e6" /><path d="M17 10l4 6" stroke="#d08b4a" strokeWidth="1.500" /></svg> },
  { n: "广联达钢筋算量", run: true, on: true, icon: <AppLogo s={24} /> },
];

function TaskBar() {
  return (
    <div className="flex h-10 shrink-0 bg-[#020b0e] text-white">
      <button aria-label="开始" className="flex w-12 items-center justify-center bg-black"><svg width="16" height="16" fill="#fff"><path d="M0 2.300L6.500 1.400v6.100H0zM7.300 1.300L16 0v7.500H7.300zM0 8.400h6.500v6.100L0 13.600zM7.300 8.400H16V16l-8.700-1.200z" /></svg></button>
      <label className="flex w-[344px] shrink-0 items-center bg-[#333] pl-2">
        <svg width="22" height="22" fill="none"><circle cx="11" cy="11" r="9" stroke="#f2f2f2" strokeWidth="2.500" /></svg>
        <input aria-label="搜索" placeholder="在这里输入你要搜索的内容" className="ml-1.5 min-w-0 flex-1 bg-transparent text-[14px] outline-none placeholder:text-[#9a9a9a]" />
        <svg width="12" height="18" fill="none" stroke="#a5a5a5" className="mr-[14px]"><path d="M3.500 2.500a2 2 0 015 0v8h-5zM.5 8.500v3.500h11V8.500M6 12v4M3 16.500h6" /></svg>
      </label>
      <button aria-label="任务视图" className="flex w-[49px] items-center justify-center"><svg width="20" height="14" fill="none" stroke="#fff"><path d="M4.500.5h11v13h-11zM2.500 2.500h-2v9h2M17.500 2.500h2v9h-2" /></svg></button>
      <button aria-label="搜狗" className="flex w-[51px] items-center justify-center">
        <svg width="22" height="22" viewBox="0 0 22 22" fill="none"><rect x=".5" y=".5" width="21" height="21" rx="6" fill="#e8e8e8" /><path d="M11 11c2-3 2-7-1-11M11 11c3 2 7 2 11-1M11 11c-2 3-2 7 1 11M11 11c-3-2-7-2-11 1" stroke="#020b0e" strokeWidth="1.500" /></svg>
      </button>
      <button aria-label="浏览器助手" className="flex w-[52px] items-center justify-center">
        <svg width="24" height="24" viewBox="0 0 24 24" fill="none"><path d="M6.500 13.500h13C20 5 8.500 5 7 12s7 9.500 11.500 5" stroke="#ececec" strokeWidth="3.600" /><path d="M4 22C-2 18 13 0 21 3" stroke="#ececec" strokeWidth="1.500" /></svg>
      </button>
      <button aria-label="通知助手" className="flex w-[52px] items-center justify-center">
        <svg width="28" height="26" viewBox="0 0 28 26" fill="none"><path d="M15 8C8 5 1 9 2 16s11 9 15 4c4-7-4-11-8-7-3 5 3 8 6 4" stroke="#e4e4e4" strokeWidth="1.500" /><path d="M14 11c2-2 1-10 6-10s4 8 6 10zM18 11h4v3h-4z" fill="#e0a80b" /></svg>
      </button>
      <div className="flex w-[340px] shrink-0">
        {apps.map((a) => (
          <button key={a.n} aria-label={a.n} className={`flex w-1/8 flex-col items-center ${a.on ? "bg-[#33424a]" : "px-1"}`}>
            <span className="flex h-[38px] items-center">{a.icon}</span>
            {a.run && <span className="h-0.5 w-full bg-[#76b9ed]" />}
          </button>
        ))}
      </div>
      <span className="flex w-[50px] items-center justify-center">链接</span>
      <span className="flex w-[61px] flex-col items-center justify-center whitespace-nowrap leading-[17px]"><span>35%</span><span>CPU使用</span></span>
      <div className="ml-[7px] flex shrink-0 items-center">
        <button aria-label="显示隐藏的图标" className="flex w-6 justify-center"><svg width="12" height="7" fill="none" stroke="#fff" strokeWidth="1.300"><path d="M.5 6L6 .8 11.500 6" /></svg></button>
        <span className="flex w-6 justify-center"><svg width="17" height="13" fill="none" stroke="#fff"><path d="M5.500 4.500h9v6h-9zM15.500 6v3M1.500 0v3M4.500 0v3M0 3.500h6M1 3.500v2l2 1v5h2" /><path d="M8 6h5v3H8z" fill="#fff" /></svg></span>
        <span className="flex w-[25px] justify-center"><svg width="14" height="14" fill="none" stroke="#ddd"><path d="M1 13C1 6 6 1 13 1M4.500 13c0-5 3.500-8.500 8.500-8.500M8 13c0-3 2-5 5-5" /><circle cx="11.500" cy="12" r="1.500" fill="#fff" /></svg></span>
        <span className="flex w-[23px] justify-center"><Volume2 className="h-[17px] w-[17px]" strokeWidth={1.5} /></span>
        <span className="flex w-[30px] justify-center"><svg width="23" height="13" fill="none" stroke="#fff"><path d="M.5.500h22v12H.5zM6 9.500h11" /><path d="M3 3.500h17M3 6.500h17" strokeDasharray="1 1" /></svg></span>
        <span className="flex w-7 justify-center">中</span>
        <span className="flex w-7 justify-center"><SogouS s={16} /></span>
      </div>
      <span className="flex w-[80px] flex-col items-center justify-center whitespace-nowrap leading-[19px]"><span>19:10</span><span>2018/5/16</span></span>
      <button aria-label="操作中心" className="flex flex-1 items-center pl-[9px]"><svg width="17" height="16" fill="none" stroke="#fff"><path d="M.5.500h16v12H11L8.500 15 6 12.500H.5z" /></svg></button>
      <span className="mr-1 w-px bg-[#555]" />
    </div>
  );
}

export default function App() {
  return (
    <div className={`relative flex h-screen min-h-[768px] flex-col overflow-hidden bg-[#f0f0f0] text-[12px] leading-4 text-black ${UI}`}>
      <TitleBar />
      <MenuBar />
      <ToolBar />
      <div className="flex min-h-0 flex-1">
        <NavPanel />
        <Workspace />
      </div>
      <StatusBar />
      <TaskBar />
      <svg className="pointer-events-none absolute left-0 top-0 z-30" width="800" height="720" fill="none" stroke="#fe0000" strokeWidth="7" shapeRendering="crispEdges">
        <ellipse cx="531" cy="301" rx="182" ry="52.500" />
        <ellipse cx="258" cy="659.500" rx="116" ry="13" />
        <ellipse cx="387.500" cy="679.500" rx="13.500" ry="7.500" />
      </svg>
    </div>
  );
}
